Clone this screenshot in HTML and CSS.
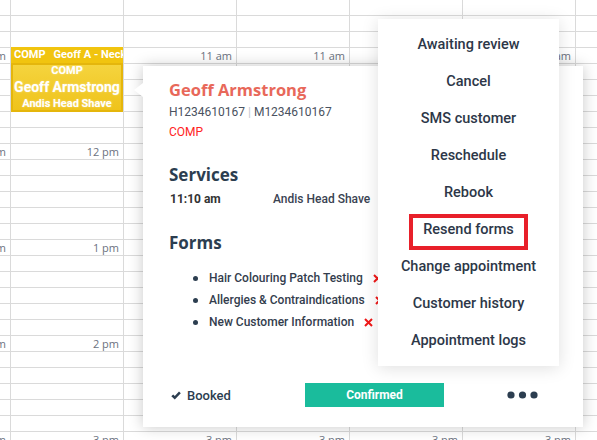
FILE: index.html
```html
<html>
<head>
<title>Calendar - appointment</title>
<link rel="stylesheet" href="styles.css">
</head>
<body>

<div class="calendar">
  <div class="col">
    <div class="hour"><span>10 am</span></div>
    <div class="hour"><span>11 am</span></div>
    <div class="hour"><span>12 pm</span></div>
    <div class="hour"><span>1 pm</span></div>
    <div class="hour"><span>2 pm</span></div>
    <div class="hour"><span>3 pm</span></div>
  </div>
  <div class="col">
    <div class="hour"><span>10 am</span></div>
    <div class="hour"><span>11 am</span></div>
    <div class="hour"><span>12 pm</span></div>
    <div class="hour"><span>1 pm</span></div>
    <div class="hour"><span>2 pm</span></div>
    <div class="hour"><span>3 pm</span></div>
    <div class="tag"><b>COMP</b><b class="tag-name">Geoff A - Neck Trim</b></div>
    <div class="appt">
      <div class="appt-comp">COMP</div>
      <div class="appt-name">Geoff Armstrong</div>
      <div class="appt-service">Andis Head Shave</div>
    </div>
  </div>
  <div class="col">
    <div class="hour"><span>10 am</span></div>
    <div class="hour"><span>11 am</span></div>
    <div class="hour"><span>12 pm</span></div>
    <div class="hour"><span>1 pm</span></div>
    <div class="hour"><span>2 pm</span></div>
    <div class="hour"><span>3 pm</span></div>
  </div>
  <div class="col">
    <div class="hour"><span>10 am</span></div>
    <div class="hour"><span>11 am</span></div>
    <div class="hour"><span>12 pm</span></div>
    <div class="hour"><span>1 pm</span></div>
    <div class="hour"><span>2 pm</span></div>
    <div class="hour"><span>3 pm</span></div>
  </div>
  <div class="col">
    <div class="hour"><span>10 am</span></div>
    <div class="hour"><span>11 am</span></div>
    <div class="hour"><span>12 pm</span></div>
    <div class="hour"><span>1 pm</span></div>
    <div class="hour"><span>2 pm</span></div>
    <div class="hour"><span>3 pm</span></div>
  </div>
  <div class="col">
    <div class="hour"><span>10 am</span></div>
    <div class="hour"><span>11 am</span></div>
    <div class="hour"><span>12 pm</span></div>
    <div class="hour"><span>1 pm</span></div>
    <div class="hour"><span>2 pm</span></div>
    <div class="hour"><span>3 pm</span></div>
  </div>
  <div class="col">
    <div class="hour"><span>10 am</span></div>
    <div class="hour"><span>11 am</span></div>
    <div class="hour"><span>12 pm</span></div>
    <div class="hour"><span>1 pm</span></div>
    <div class="hour"><span>2 pm</span></div>
    <div class="hour"><span>3 pm</span></div>
  </div>
</div>

<!-- appointment popover -->
<div class="card">
  <div class="name">Geoff Armstrong</div>
  <div class="ids">H1234610167 <span class="sep">|</span> M1234610167</div>
  <div class="comp">COMP</div>

  <h2 class="heading">Services</h2>
  <div class="service">
    <span class="service-time">11:10 am</span>
    <span class="service-name">Andis Head Shave</span>
  </div>

  <h2 class="heading forms-heading">Forms</h2>
  <ul class="forms">
    <li>Hair Colouring Patch Testing <svg class="cross" width="9" height="9" viewBox="0 0 9 9"><path d="M1 1L8 8M8 1L1 8"/></svg></li>
    <li>Allergies &amp; Contraindications <svg class="cross" width="9" height="9" viewBox="0 0 9 9"><path d="M1 1L8 8M8 1L1 8"/></svg></li>
    <li>New Customer Information <svg class="cross" width="9" height="9" viewBox="0 0 9 9"><path d="M1 1L8 8M8 1L1 8"/></svg></li>
  </ul>

  <div class="footer">
    <div class="status">
      <svg width="10" height="9" viewBox="0 0 10 9"><path d="M0.3 5.2L2.2 3.4L3.8 5L8 0.4L9.8 2.2L3.8 8.6Z"/></svg>
      Booked
    </div>
    <div class="confirm">Confirmed</div>
    <svg class="more" width="31" height="8" viewBox="0 0 31 8"><circle cx="4" cy="4" r="3.6"/><circle cx="15.5" cy="4" r="3.6"/><circle cx="27" cy="4" r="3.6"/></svg>
  </div>
</div>

<!-- actions menu -->
<div class="menu">
  <div class="menu-item">Awaiting review</div>
  <div class="menu-item">Cancel</div>
  <div class="menu-item">SMS customer</div>
  <div class="menu-item">Reschedule</div>
  <div class="menu-item">Rebook</div>
  <div class="menu-item marked">Resend forms</div>
  <div class="menu-item">Change appointment</div>
  <div class="menu-item">Customer history</div>
  <div class="menu-item">Appointment logs</div>
</div>

</body>
</html>
```

FILE: styles.css
```css
*{box-sizing:border-box;}
body{margin:0;padding:0;width:597px;height:440px;overflow:hidden;position:relative;background:#fff;font-family:Roboto, "Liberation Sans", sans-serif;color:#2d3748;}

/* calendar grid */
.calendar{display:flex;margin:-49px 0 0 -103px;}
.col{flex:0 0 113px;position:relative;border-left:1px solid #dadada;background:repeating-linear-gradient(to bottom, #dadada 0 1px, transparent 1px 16px);}
.hour{height:96px;}
.hour span{display:block;line-height:17px;text-align:right;padding-right:4px;font-family:"Open Sans", sans-serif;font-size:11px;color:#6b7280;}

.tag{position:absolute;left:0;right:0;top:96px;height:16px;padding-left:3px;background:#f1c40f;color:#fff;font-size:11px;line-height:16px;white-space:nowrap;overflow:hidden;}
.tag-name{margin-left:8px;}
.appt{position:absolute;left:0;right:0;top:112px;height:49px;border:2px solid #e5b60c;background:linear-gradient(#f5d43e, #efc31b);color:#fff;text-align:center;font-weight:700;white-space:nowrap;overflow:hidden;text-shadow:0 0 2px rgba(255,255,255,.5);}
.appt-comp{font-size:11px;line-height:12px;}
.appt-name{font-size:14px;line-height:20px;}
.appt-service{font-size:11px;line-height:13px;}

/* popover */
.card{position:absolute;left:143px;top:66px;width:440px;height:361px;padding:14px 0 20px 26px;background:#fff;box-shadow:0 0 14px rgba(0,0,0,.22);display:flex;flex-direction:column;}
.card::before{content:"";position:absolute;left:-9px;top:17px;border-style:solid;border-width:7px 9px 7px 0;border-color:transparent #fff transparent transparent;}
.name{font-family:"Open Sans", sans-serif;font-weight:700;font-size:16.5px;line-height:20px;color:#e8685a;}
.ids{margin-top:4px;font-size:12px;line-height:16px;color:#4a5260;}
.sep{color:#c4c8ce;}
.comp{margin-top:4px;font-size:12px;line-height:16px;color:#ff2424;}
.heading{margin:25px 0 0;font-family:"Open Sans", sans-serif;font-weight:700;font-size:17px;line-height:20px;color:#2c3e50;}
.service{margin-top:6px;display:flex;font-size:12px;line-height:16px;}
.service-time{flex:0 0 104px;font-weight:700;color:#333;padding-left:1px;}
.service-name{font-weight:500;color:#3a4352;}
.forms-heading{margin-top:26px;}
.forms{list-style:none;margin:14px 0 0;padding:0;}
.forms li{display:flex;align-items:center;font-size:12px;line-height:22px;font-weight:500;color:#333d4d;}
.forms li::before{content:"";width:5px;height:5px;border-radius:50%;background:#2c3e50;margin:0 11px 0 24px;}
.cross{margin-left:10px;fill:none;stroke:#f01818;stroke-width:2;}

.footer{margin-top:auto;display:flex;align-items:center;height:24px;}
.status{flex:0 0 136px;display:flex;align-items:center;gap:6px;padding-left:2px;font-size:13px;font-weight:500;color:#2c3e50;}
.status svg{fill:#2c3e50;}
.confirm{flex:0 0 139px;height:24px;line-height:24px;text-align:center;background:#1abc9c;color:#fff;font-size:12px;font-weight:700;}
.more{margin-left:63px;fill:#2c3e50;}

/* actions menu */
.menu{position:absolute;left:378px;top:19px;width:181px;padding:7px 0;background:#fff;box-shadow:0 2px 16px rgba(0,0,0,.13);}
.menu-item{height:37px;line-height:37px;text-align:center;font-size:14.5px;font-weight:500;color:#2d3748;}
.marked{position:relative;}
.marked::after{content:"";position:absolute;left:31px;right:31px;top:3px;bottom:-2px;border:4px solid #e8202a;}
```
